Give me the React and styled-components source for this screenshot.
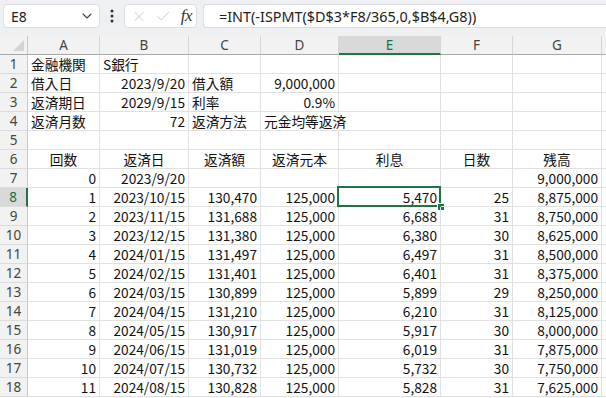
import React from "react";
import styled, { createGlobalStyle } from "styled-components";
import { ChevronDown, X, Check } from "lucide-react";

const Global = createGlobalStyle`
  html, body { margin: 0; padding: 0; background: #ffffff; }
  body { width: 606px; height: 398px; overflow: hidden; font-family: "Noto Sans CJK JP", "Noto Sans", sans-serif; }
`;

const GREEN = "#217346";
const COLS = [28, 72, 89, 72, 78, 102, 72, 89];
const LETTERS = ["A", "B", "C", "D", "E", "F", "G", ""];

const Page = styled.div`
  width: 606px;
  height: 398px;
  overflow: hidden;
  background: #ffffff;
`;

const Toolbar = styled.div`
  height: 36px;
  box-sizing: border-box;
  background: #eef0f4;
  display: flex;
  align-items: flex-start;
  padding: 4px 0 0 3px;
`;

const Box = styled.div`
  height: 24px;
  box-sizing: border-box;
  background: #ffffff;
  border: 1px solid #dcdde0;
  border-radius: 4px;
  display: flex;
  align-items: center;
`;

const NameBox = styled(Box)`
  width: 97px;
  padding: 0 4px 0 7px;
  justify-content: space-between;
  font-family: "Noto Sans", sans-serif;
  font-size: 14px;
  color: #222;
`;

const Dots = styled.div`
  width: 24px;
  height: 24px;
  display: flex;
  align-items: center;
  justify-content: center;
`;

const FxBox = styled(Box)`
  width: 73px;
  padding: 0 4px 0 6px;
  gap: 8px;
  color: #c4c4c4;
`;

const Fx = styled.span`
  font-family: "Liberation Serif", serif;
  font-style: italic;
  font-size: 17px;
  color: #333;
  margin-left: 1px;
  letter-spacing: -0.5px;
`;

const FormulaBox = styled(Box)`
  flex: 1;
  margin-left: 6px;
  padding-left: 15px;
  border-right: none;
  border-radius: 4px 0 0 4px;
  font-family: "Noto Sans", sans-serif;
  font-size: 14.4px;
  color: #222;
  white-space: nowrap;
`;

const Sheet = styled.div`
  display: grid;
  grid-template-columns: ${COLS.map((c) => c + "px").join(" ")} 1fr;
  grid-auto-rows: 19px;
`;

const Corner = styled.div`
  background: #f2f2f2;
  border-right: 1px solid #c8c8c8;
  border-bottom: 1px solid #a8a8a8;
  box-sizing: border-box;
  position: relative;
  &::after {
    content: "";
    position: absolute;
    right: 3px;
    bottom: 3px;
    width: 0;
    height: 0;
    border-left: 11px solid transparent;
    border-bottom: 11px solid #d4d4d4;
  }
`;

const ColHead = styled.div`
  box-sizing: border-box;
  background: ${(p) => (p.$sel ? "#d9d9d9" : "#f2f2f2")};
  border-right: 1px solid #d6d6d6;
  border-bottom: ${(p) => (p.$sel ? `2px solid ${GREEN}` : "1px solid #a8a8a8")};
  color: ${(p) => (p.$sel ? GREEN : "#444")};
  font-family: "Noto Sans", sans-serif;
  font-size: 13.5px;
  display: flex;
  align-items: center;
  justify-content: center;
  padding-bottom: ${(p) => (p.$sel ? "0" : "1px")};
`;

const RowHead = styled.div`
  box-sizing: border-box;
  background: ${(p) => (p.$sel ? "#d9d9d9" : "#f2f2f2")};
  border-right: ${(p) => (p.$sel ? `2px solid ${GREEN}` : "1px solid #c8c8c8")};
  border-bottom: 1px solid #dcdcdc;
  color: ${(p) => (p.$sel ? GREEN : "#444")};
  font-family: "Noto Sans", sans-serif;
  font-size: 13.5px;
  display: flex;
  align-items: center;
  justify-content: center;
`;

const Cell = styled.div`
  box-sizing: border-box;
  position: relative;
  border-right: 1px solid ${(p) => (p.$overflow ? "#ffffff" : "#e1e1e1")};
  border-bottom: 1px solid #e1e1e1;
  padding: 0 3px;
  font-size: 13.7px;
  line-height: 18px;
  color: #111;
  white-space: nowrap;
  overflow: visible;
  text-align: ${(p) => p.$align};
  z-index: ${(p) => (p.$overflow ? 1 : 0)};
`;

const Selection = styled.div`
  position: absolute;
  top: -2px;
  left: -2px;
  right: -1px;
  bottom: -1px;
  border: 2px solid ${GREEN};
  pointer-events: none;
  z-index: 2;
  &::after {
    content: "";
    position: absolute;
    right: -5px;
    bottom: -5px;
    width: 6px;
    height: 6px;
    background: ${GREEN};
    border: 1px solid #fff;
    border-right: none;
    border-bottom: none;
  }
`;

const L = (v) => ({ v, a: "left" });
const R = (v) => ({ v, a: "right" });
const C = (v) => ({ v, a: "center" });
const E = { v: "", a: "left" };

const schedule = [
  ["1", "2023/10/15", "130,470", "125,000", "5,470", "25", "8,875,000"],
  ["2", "2023/11/15", "131,688", "125,000", "6,688", "31", "8,750,000"],
  ["3", "2023/12/15", "131,380", "125,000", "6,380", "30", "8,625,000"],
  ["4", "2024/01/15", "131,497", "125,000", "6,497", "31", "8,500,000"],
  ["5", "2024/02/15", "131,401", "125,000", "6,401", "31", "8,375,000"],
  ["6", "2024/03/15", "130,899", "125,000", "5,899", "29", "8,250,000"],
  ["7", "2024/04/15", "131,210", "125,000", "6,210", "31", "8,125,000"],
  ["8", "2024/05/15", "130,917", "125,000", "5,917", "30", "8,000,000"],
  ["9", "2024/06/15", "131,019", "125,000", "6,019", "31", "7,875,000"],
  ["10", "2024/07/15", "130,732", "125,000", "5,732", "30", "7,750,000"],
  ["11", "2024/08/15", "130,828", "125,000", "5,828", "31", "7,625,000"],
];

const rows = [
  [L("金融機関"), L("S銀行"), E, E, E, E, E, E],
  [L("借入日"), R("2023/9/20"), L("借入額"), R("9,000,000"), E, E, E, E],
  [L("返済期日"), R("2029/9/15"), L("利率"), R("0.9%"), E, E, E, E],
  [L("返済月数"), R("72"), L("返済方法"), { v: "元金均等返済", a: "left", o: true }, E, E, E, E],
  [E, E, E, E, E, E, E, E],
  [C("回数"), C("返済日"), C("返済額"), C("返済元本"), C("利息"), C("日数"), C("残高"), E],
  [R("0"), R("2023/9/20"), E, E, E, E, R("9,000,000"), E],
  ...schedule.map((r) => [...r.map(R), E]),
];

function VDots() {
  return (
    <svg width="4" height="14" viewBox="0 0 4 14">
      <circle cx="2" cy="2" r="1.5" fill="#333" />
      <circle cx="2" cy="7" r="1.5" fill="#333" />
      <circle cx="2" cy="12" r="1.5" fill="#333" />
    </svg>
  );
}

export default function App() {
  return (
    <Page>
      <Global />
      <Toolbar>
        <NameBox>
          <span>E8</span>
          <ChevronDown size={16} strokeWidth={1.6} color="#444" />
        </NameBox>
        <Dots>
          <VDots />
        </Dots>
        <FxBox>
          <X size={17} strokeWidth={1.3} />
          <Check size={17} strokeWidth={1.3} />
          <Fx>fx</Fx>
        </FxBox>
        <FormulaBox>=INT(-ISPMT($D$3*F8/365,0,$B$4,G8))</FormulaBox>
      </Toolbar>
      <Sheet>
        <Corner />
        {LETTERS.map((l, i) => (
          <ColHead key={i} $sel={l === "E"}>
            {l}
          </ColHead>
        ))}
        {rows.map((row, ri) => (
          <React.Fragment key={ri}>
            <RowHead $sel={ri === 7}>{ri + 1}</RowHead>
            {row.map((c, ci) => (
              <Cell key={ci} $align={c.a} $overflow={c.o}>
                {c.v}
                {ri === 7 && ci === 4 && <Selection />}
              </Cell>
            ))}
          </React.Fragment>
        ))}
      </Sheet>
    </Page>
  );
}
